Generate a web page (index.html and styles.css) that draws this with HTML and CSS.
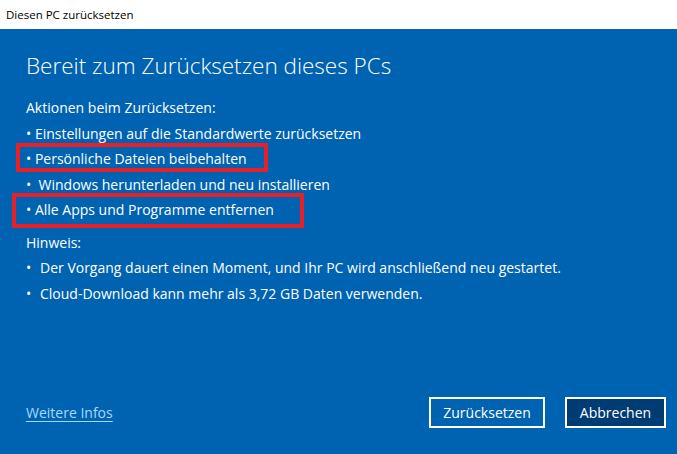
FILE: index.html
```html
<!DOCTYPE html>
<html lang="de">
<head>
<meta charset="utf-8">
<link rel="stylesheet" href="styles.css">
</head>
<body>
<div class="window">
  <div class="titlebar">Diesen PC zurücksetzen</div>
  <div class="content">
    <h1 class="heading">Bereit zum Zurücksetzen dieses PCs</h1>
    <div class="section">
      <div class="row">Aktionen beim Zurücksetzen:</div>
      <div class="row">• Einstellungen auf die Standardwerte zurücksetzen</div>
      <div class="row">• Persönliche Dateien beibehalten</div>
      <div class="row">•&nbsp; Windows herunterladen und neu installieren</div>
      <div class="row">• Alle Apps und Programme entfernen</div>
    </div>
    <div class="section notes">
      <div class="row">Hinweis:</div>
      <div class="row bullet"><span class="dot">•</span>Der Vorgang dauert einen Moment, und Ihr PC wird anschließend neu gestartet.</div>
      <div class="row bullet"><span class="dot">•</span>Cloud-Download kann mehr als 3,72 GB Daten verwenden.</div>
    </div>
    <div class="footer">
      <a class="link" href="#">Weitere Infos</a>
      <div class="buttons">
        <button class="btn">Zurücksetzen</button>
        <button class="btn primary">Abbrechen</button>
      </div>
    </div>
    <div class="mark mark-one"></div>
    <div class="mark mark-two"></div>
  </div>
</div>
</body>
</html>
```

FILE: styles.css
```css
html, body {
  margin: 0;
  padding: 0;
}
body {
  width: 677px;
  height: 454px;
  overflow: hidden;
  font-family: "Open Sans", "Noto Sans", sans-serif;
}
.window {
  display: flex;
  flex-direction: column;
  height: 454px;
}
.titlebar {
  height: 29px;
  box-sizing: border-box;
  background: #ffffff;
  color: #000000;
  font-size: 11.5px;
  padding: 7px 0 0 6px;
}
.content {
  position: relative;
  flex: 1;
  background: #0063b1;
  color: #ffffff;
  display: flex;
  flex-direction: column;
  padding: 0 0 0 26px;
}
.heading {
  margin: 0;
  padding-top: 20px;
  font-weight: 300;
  font-size: 22.5px;
  line-height: 34px;
  letter-spacing: 0;
}
.section {
  margin-top: 12px;
  font-size: 14px;
}
.notes {
  margin-top: 7px;
}
.row {
  height: 25.5px;
  line-height: 25.5px;
  white-space: nowrap;
}
.bullet .dot {
  display: inline-block;
  width: 14px;
}
.footer {
  margin-top: auto;
  margin-bottom: 26px;
  display: flex;
  align-items: center;
  justify-content: space-between;
  padding-right: 11px;
}
.link {
  color: #a6d8ff;
  font-size: 14px;
  text-decoration: underline;
  text-underline-offset: 3px;
}
.buttons {
  display: flex;
  gap: 20px;
}
.btn {
  font-family: inherit;
  font-size: 14px;
  color: #ffffff;
  background: transparent;
  border: 2px solid #ffffff;
  height: 31px;
  padding: 0;
  width: 116px;
}
.btn.primary {
  width: 101px;
  background: #003c74;
}
.mark {
  position: absolute;
  border: 4px solid #e8202a;
}
.mark-one {
  left: 16px;
  top: 114px;
  width: 244px;
  height: 21px;
}
.mark-two {
  left: 12px;
  top: 164px;
  width: 284px;
  height: 27px;
}
```
